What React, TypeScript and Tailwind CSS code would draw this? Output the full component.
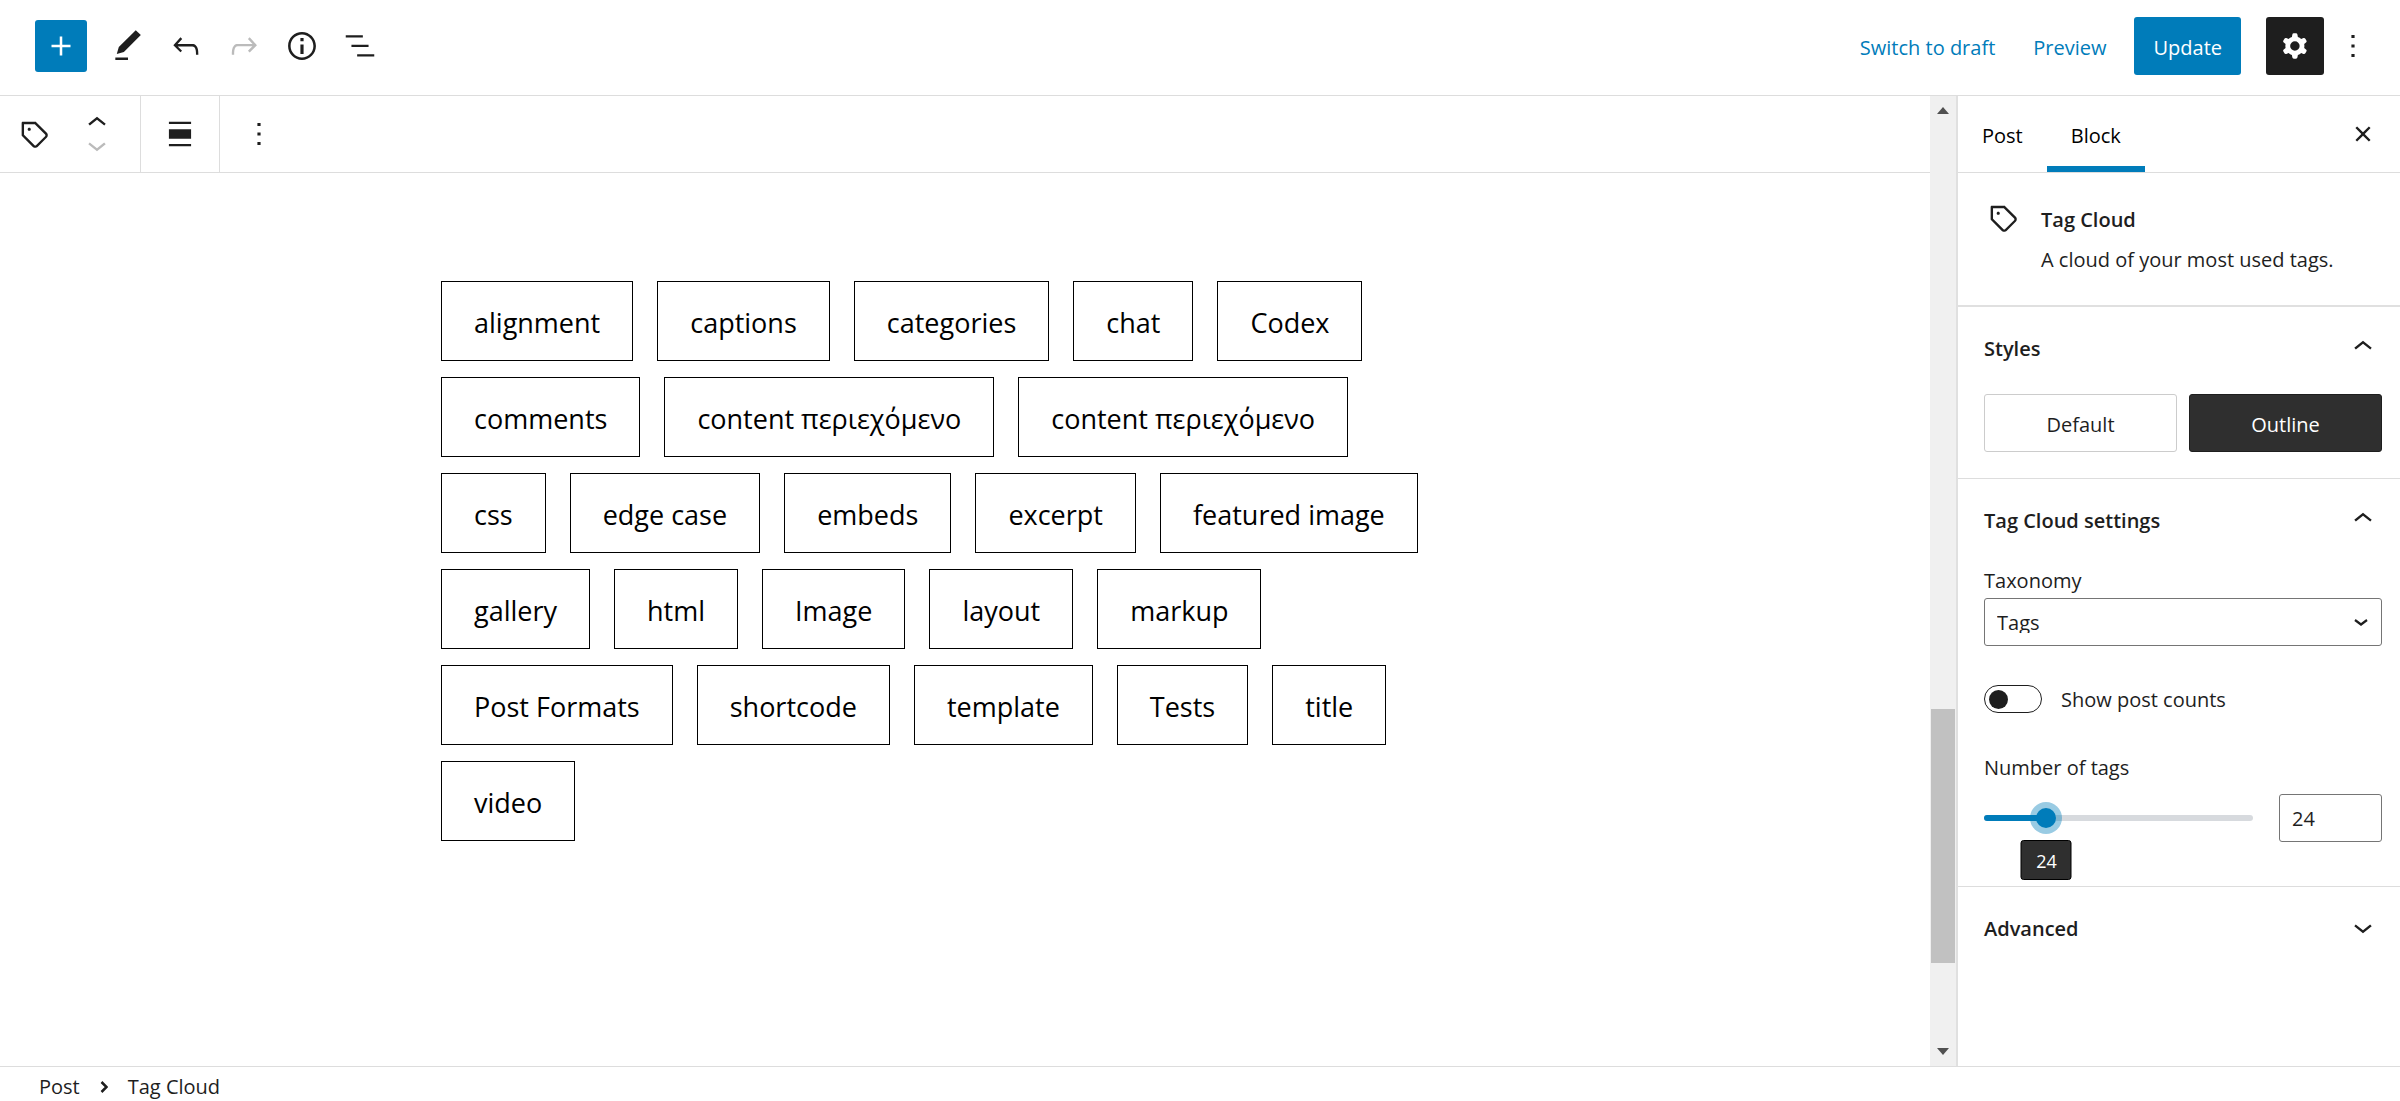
import { ReactNode, useState } from "react";

const ICONS = {
  plus: "M18 11.2h-5.2V6h-1.6v5.2H6v1.6h5.2V18h1.6v-5.2H18z",
  edit: "M20.1 5.1L16.9 2 6.2 12.7l-1.3 4.4 4.5-1.3L20.1 5.1zM4 20.8h8v-1.5H4v1.5z",
  undo: "M18.3 11.7c-.6-.6-1.4-.9-2.3-.9H6.7l2.9-3.3-1.1-1-4.5 5L8.5 16l1-1-2.7-2.7H16c.5 0 .9.2 1.3.5 1 1 1 3.4 1 4.5v.3h1.5v-.2c0-1.5 0-4.3-1.5-5.7z",
  redo: "M15.6 6.5l-1.1 1 2.9 3.3H8c-.9 0-1.7.3-2.3.9-1.4 1.5-1.4 4.2-1.4 5.6v.2h1.5v-.3c0-1.1 0-3.5 1-4.5.3-.3.7-.5 1.3-.5h9.2L14.5 15l1.1 1.1 4.6-4.6-4.6-5z",
  info: "M12 3.2c-4.8 0-8.8 3.9-8.8 8.8 0 4.8 3.9 8.8 8.8 8.8 4.8 0 8.8-3.9 8.8-8.8 0-4.8-4-8.8-8.8-8.8zm0 16c-4 0-7.2-3.3-7.2-7.2C4.8 8 8 4.8 12 4.8s7.2 3.3 7.2 7.2c0 4-3.2 7.2-7.2 7.2zM11 17h2v-6h-2v6zm0-8h2V7h-2v2z",
  listView: "M13.8 5.2H3v1.5h10.8V5.2zm-3.6 12v1.5H21v-1.5H10.2zm7.2-6H6.6v1.5h10.8v-1.5z",
  cog: "M10.289 4.836A1 1 0 0111.275 4h1.306a1 1 0 01.987.836l.244 1.466c.787.26 1.503.679 2.108 1.218l1.393-.522a1 1 0 011.216.437l.653 1.13a1 1 0 01-.23 1.273l-1.148.944a6.025 6.025 0 010 2.435l1.149.946a1 1 0 01.23 1.272l-.653 1.13a1 1 0 01-1.216.437l-1.394-.522c-.605.54-1.32.958-2.108 1.218l-.244 1.466a1 1 0 01-.987.836h-1.306a1 1 0 01-.986-.836l-.244-1.466a5.995 5.995 0 01-2.108-1.218l-1.394.522a1 1 0 01-1.217-.436l-.653-1.131a1 1 0 01.23-1.272l1.149-.946a6.026 6.026 0 010-2.435l-1.148-.944a1 1 0 01-.23-1.272l.653-1.131a1 1 0 011.217-.437l1.393.522a5.994 5.994 0 012.108-1.218l.244-1.466zM14.929 12a3 3 0 11-6 0 3 3 0 016 0z",
  more: "M13 19h-2v-2h2v2zm0-6h-2v-2h2v2zm0-6h-2V5h2v2z",
  tag: "M20.1 11.2l-6.7-6.7c-.1-.1-.3-.2-.5-.2H5c-.4-.1-.8.3-.8.7v7.8c0 .2.1.4.2.5l6.7 6.7c.2.2.5.4.7.5s.6.2.9.2c.3 0 .6-.1.9-.2.3-.1.5-.3.8-.5l5.6-5.6c.4-.4.7-1 .7-1.6.1-.6-.2-1.2-.6-1.6zM19 13.4L13.4 19c-.1.1-.2.1-.3.2-.2.1-.4.1-.6 0-.1 0-.2-.1-.3-.2l-6.5-6.5V5.8h6.8l6.5 6.5c.2.2.2.4.2.6 0 .1 0 .3-.2.5zM9 8c-.6 0-1 .4-1 1s.4 1 1 1 1-.4 1-1-.4-1-1-1z",
  chevronUp: "M6.5 12.4L12 8l5.5 4.4-.9 1.2L12 10l-4.5 3.6-1-1.2z",
  chevronDown: "M17.5 11.6L12 16l-5.5-4.4.9-1.2L12 14l4.5-3.6 1 1.2z",
  align: "M5 15h14V9H5v6zm0 4.8h14v-1.5H5v1.5zM5 4.2v1.5h14V4.2H5z",
  close: "M12 13.06l3.712 3.713 1.061-1.06L13.061 12l3.712-3.712-1.06-1.06L12 10.938 8.288 7.227l-1.061 1.06L10.939 12l-3.712 3.712 1.06 1.061L12 13.061z",
};

const TAGS = [
  "alignment",
  "captions",
  "categories",
  "chat",
  "Codex",
  "comments",
  "content περιεχόμενο",
  "content περιεχόμενο",
  "css",
  "edge case",
  "embeds",
  "excerpt",
  "featured image",
  "gallery",
  "html",
  "Image",
  "layout",
  "markup",
  "Post Formats",
  "shortcode",
  "template",
  "Tests",
  "title",
  "video",
];

const MIN_TAGS = 1;
const MAX_TAGS = 100;

function Icon({ name }: { name: keyof typeof ICONS }) {
  return (
    <svg aria-hidden="true" className="size-[38px] shrink-0" fill="currentColor" viewBox="0 0 24 24">
      <path clipRule="evenodd" d={ICONS[name]} fillRule="evenodd" />
    </svg>
  );
}

interface IconButtonProps {
  className?: string;
  disabled?: boolean;
  icon: keyof typeof ICONS;
  label: string;
}

function IconButton({ className = "h-[58px] w-[58px]", disabled, icon, label }: IconButtonProps) {
  return (
    <button
      aria-label={label}
      className={`flex shrink-0 items-center justify-center disabled:text-[#bbb] ${className}`}
      disabled={disabled}
      type="button"
    >
      <Icon name={icon} />
    </button>
  );
}

function Header() {
  return (
    <header className="flex h-24 shrink-0 items-center justify-between border-b border-[#ddd] pr-[18px] pb-[3px] pl-[35px]">
      <div className="flex items-center">
        <IconButton className="mr-3 h-[52px] w-[52px] rounded-[3px] bg-[#007cba] text-white" icon="plus" label="Add block" />
        <IconButton icon="edit" label="Tools" />
        <IconButton icon="undo" label="Undo" />
        <IconButton disabled icon="redo" label="Redo" />
        <IconButton icon="info" label="Details" />
        <IconButton icon="listView" label="List view" />
      </div>
      <div className="flex items-center">
        <button className="mr-[38px] pt-[3px] text-[#007cba]" type="button">
          Switch to draft
        </button>
        <button className="mr-7 pt-[3px] text-[#007cba]" type="button">
          Preview
        </button>
        <button className="h-[58px] rounded-[3px] bg-[#007cba] px-[19px] pt-[3px] text-white" type="button">
          Update
        </button>
        <IconButton className="ml-[25px] h-[58px] w-[58px] rounded-[3px] bg-[#1e1e1e] text-white" icon="cog" label="Settings" />
        <IconButton icon="more" label="Options" />
      </div>
    </header>
  );
}

function BlockToolbar() {
  return (
    <div className="flex h-[77px] shrink-0 border-b border-[#ddd]" role="toolbar">
      <div className="flex items-center border-r border-[#ddd] pr-[14px] pl-[5px]">
        <IconButton icon="tag" label="Tag Cloud" />
        <div className="ml-[5px] flex flex-col">
          <IconButton className="h-[22px] w-[58px]" icon="chevronUp" label="Move up" />
          <IconButton className="h-[22px] w-[58px]" disabled icon="chevronDown" label="Move down" />
        </div>
      </div>
      <div className="flex items-center border-r border-[#ddd] px-[10px]">
        <IconButton icon="align" label="Align" />
      </div>
      <div className="flex items-center px-[10px]">
        <IconButton icon="more" label="Options" />
      </div>
    </div>
  );
}

function TagCloud() {
  return (
    <div className="mx-auto flex w-full max-w-[1048px] flex-wrap gap-x-6 gap-y-4 pr-6 text-[27px] text-black">
      {TAGS.map((tag, index) => (
        <a className="flex h-20 items-center border border-black px-8 pt-1" href="#tag" key={index}>
          {tag}
        </a>
      ))}
    </div>
  );
}

function Scrollbar() {
  return (
    <div aria-hidden="true" className="flex w-[26px] shrink-0 flex-col items-center bg-[#f0f0f0] py-[11px]">
      <svg className="h-[7px] w-3" viewBox="0 0 12 7">
        <path d="M6 0l6 7H0z" fill="#505050" />
      </svg>
      <div className="grow-[595]" />
      <div className="w-6 grow-[254] bg-[#c1c1c1]" />
      <div className="grow-[85]" />
      <svg className="h-[7px] w-3" viewBox="0 0 12 7">
        <path d="M0 0h12L6 7z" fill="#505050" />
      </svg>
    </div>
  );
}

interface PanelProps {
  children?: ReactNode;
  className?: string;
  title: string;
}

function Panel({ children, className = "", title }: PanelProps) {
  return (
    <section className={`border-b border-[#ddd] pr-[18px] pl-[26px] ${className}`}>
      <h2>
        <button
          aria-expanded={!!children}
          className="flex h-20 w-full items-center justify-between text-left font-semibold"
          type="button"
        >
          <span className="pt-[3px]">{title}</span>
          <Icon name={children ? "chevronUp" : "chevronDown"} />
        </button>
      </h2>
      {children}
    </section>
  );
}

function Sidebar() {
  const [style, setStyle] = useState("Outline");
  const [showCounts, setShowCounts] = useState(false);
  const [count, setCount] = useState(24);

  const percent = `${((count - MIN_TAGS) / (MAX_TAGS - MIN_TAGS)) * 100}%`;

  return (
    <aside className="w-[444px] shrink-0 border-l-2 border-[#e0e0e0]">
      <div className="flex h-[77px] items-stretch border-b border-[#ddd] pr-2">
        <button className="px-6 pt-[3px] font-medium text-black" type="button">
          Post
        </button>
        <button className="border-b-6 border-[#007cba] px-6 pt-[9px] font-medium text-black" type="button">
          Block
        </button>
        <IconButton className="ml-auto w-[58px]" icon="close" label="Close settings" />
      </div>

      <div className="flex gap-[19px] border-b-2 border-[#e0e0e0] pt-[26px] pb-[25px] pl-[26px]">
        <Icon name="tag" />
        <div>
          <h2 className="leading-[41px] font-semibold">Tag Cloud</h2>
          <p className="leading-10">A cloud of your most used tags.</p>
        </div>
      </div>

      <Panel className="pb-[26px]" title="Styles">
        <div className="mt-[7px] grid grid-cols-2 gap-3">
          {["Default", "Outline"].map((name) => (
            <button
              aria-pressed={style === name}
              className={`h-[58px] rounded-[3px] border pt-[3px] ${
                style === name ? "border-[#1e1e1e] bg-[#2f2f2f] text-white" : "border-[#ccc]"
              }`}
              key={name}
              onClick={() => setStyle(name)}
              type="button"
            >
              {name}
            </button>
          ))}
        </div>
      </Panel>

      <Panel className="pb-11" title="Tag Cloud settings">
        <label className="block pt-1 leading-[35px]" htmlFor="taxonomy">
          Taxonomy
        </label>
        <div className="grid items-center">
          <select
            className="h-12 w-full appearance-none rounded-[3px] border border-[#757575] bg-white px-3 pt-[2px] leading-5 [grid-area:1/1]"
            id="taxonomy"
          >
            <option>Tags</option>
            <option>Categories</option>
          </select>
          <svg
            aria-hidden="true"
            className="pointer-events-none mr-3 size-[18px] justify-self-end [grid-area:1/1]"
            fill="none"
            viewBox="0 0 18 18"
          >
            <path d="M3 7l6 4.5L15 7" stroke="currentColor" strokeWidth="2.2" />
          </svg>
        </div>

        <label className="mt-[34px] flex items-center gap-[19px] leading-9">
          <input
            checked={showCounts}
            className="flex h-7 w-[58px] appearance-none items-center rounded-full border border-[#1e1e1e] px-1 before:size-[19px] before:rounded-full before:bg-[#1e1e1e] checked:justify-end"
            onChange={(e) => setShowCounts(e.target.checked)}
            type="checkbox"
          />
          <span className="pt-[2px]">Show post counts</span>
        </label>

        <label className="mt-8 block leading-9" htmlFor="tag-count">
          Number of tags
        </label>
        <div className="mt-2 flex items-center gap-[26px]">
          <div className="relative grid flex-1 items-center">
            <div className="h-[6px] rounded-full bg-[#d7dade] [grid-area:1/1]">
              <div className="h-full rounded-full bg-[#007cba]" style={{ width: percent }} />
            </div>
            <input
              className="z-10 -mx-[10px] h-5 appearance-none bg-transparent [grid-area:1/1] [&::-webkit-slider-thumb]:size-5 [&::-webkit-slider-thumb]:appearance-none [&::-webkit-slider-thumb]:rounded-full [&::-webkit-slider-thumb]:bg-[#007cba] [&::-webkit-slider-thumb]:shadow-[0_0_0_6px_#007cba66]"
              id="tag-count"
              max={MAX_TAGS}
              min={MIN_TAGS}
              onChange={(e) => setCount(Number(e.target.value))}
              type="range"
              value={count}
            />
            <output
              className="absolute top-full mt-3 flex h-10 w-[51px] -translate-x-1/2 items-center justify-center rounded-[3px] border border-black bg-[#2f2f2f] pt-[2px] text-lg text-white"
              htmlFor="tag-count"
              style={{ left: percent }}
            >
              {count}
            </output>
          </div>
          <input
            aria-label="Number of tags"
            className="h-12 w-[103px] rounded-[3px] border border-[#757575] px-3"
            onChange={(e) => setCount(Number(e.target.value))}
            type="text"
            value={count}
          />
        </div>
      </Panel>

      <Panel className="border-b-0" title="Advanced" />
    </aside>
  );
}

export default function App() {
  return (
    <div className="flex min-h-screen flex-col bg-white font-['Open_Sans','Noto_Sans',sans-serif] text-[20px] text-[#1e1e1e]">
      <Header />
      <div className="flex grow">
        <main className="flex min-w-0 flex-1 flex-col">
          <BlockToolbar />
          <div className="px-6 pt-[108px] pb-16">
            <TagCloud />
          </div>
        </main>
        <Scrollbar />
        <Sidebar />
      </div>
      <footer className="flex h-[35px] shrink-0 items-center border-t border-[#ddd] pt-[6px] pl-[39px]">
        <nav aria-label="Block breadcrumb" className="flex items-center">
          <button type="button">Post</button>
          <svg aria-hidden="true" className="mx-5 h-3 w-2" fill="none" viewBox="0 0 8 12">
            <path d="M1.5 1l5 5-5 5" stroke="currentColor" strokeWidth="2.5" />
          </svg>
          <button type="button">Tag Cloud</button>
        </nav>
      </footer>
    </div>
  );
}
